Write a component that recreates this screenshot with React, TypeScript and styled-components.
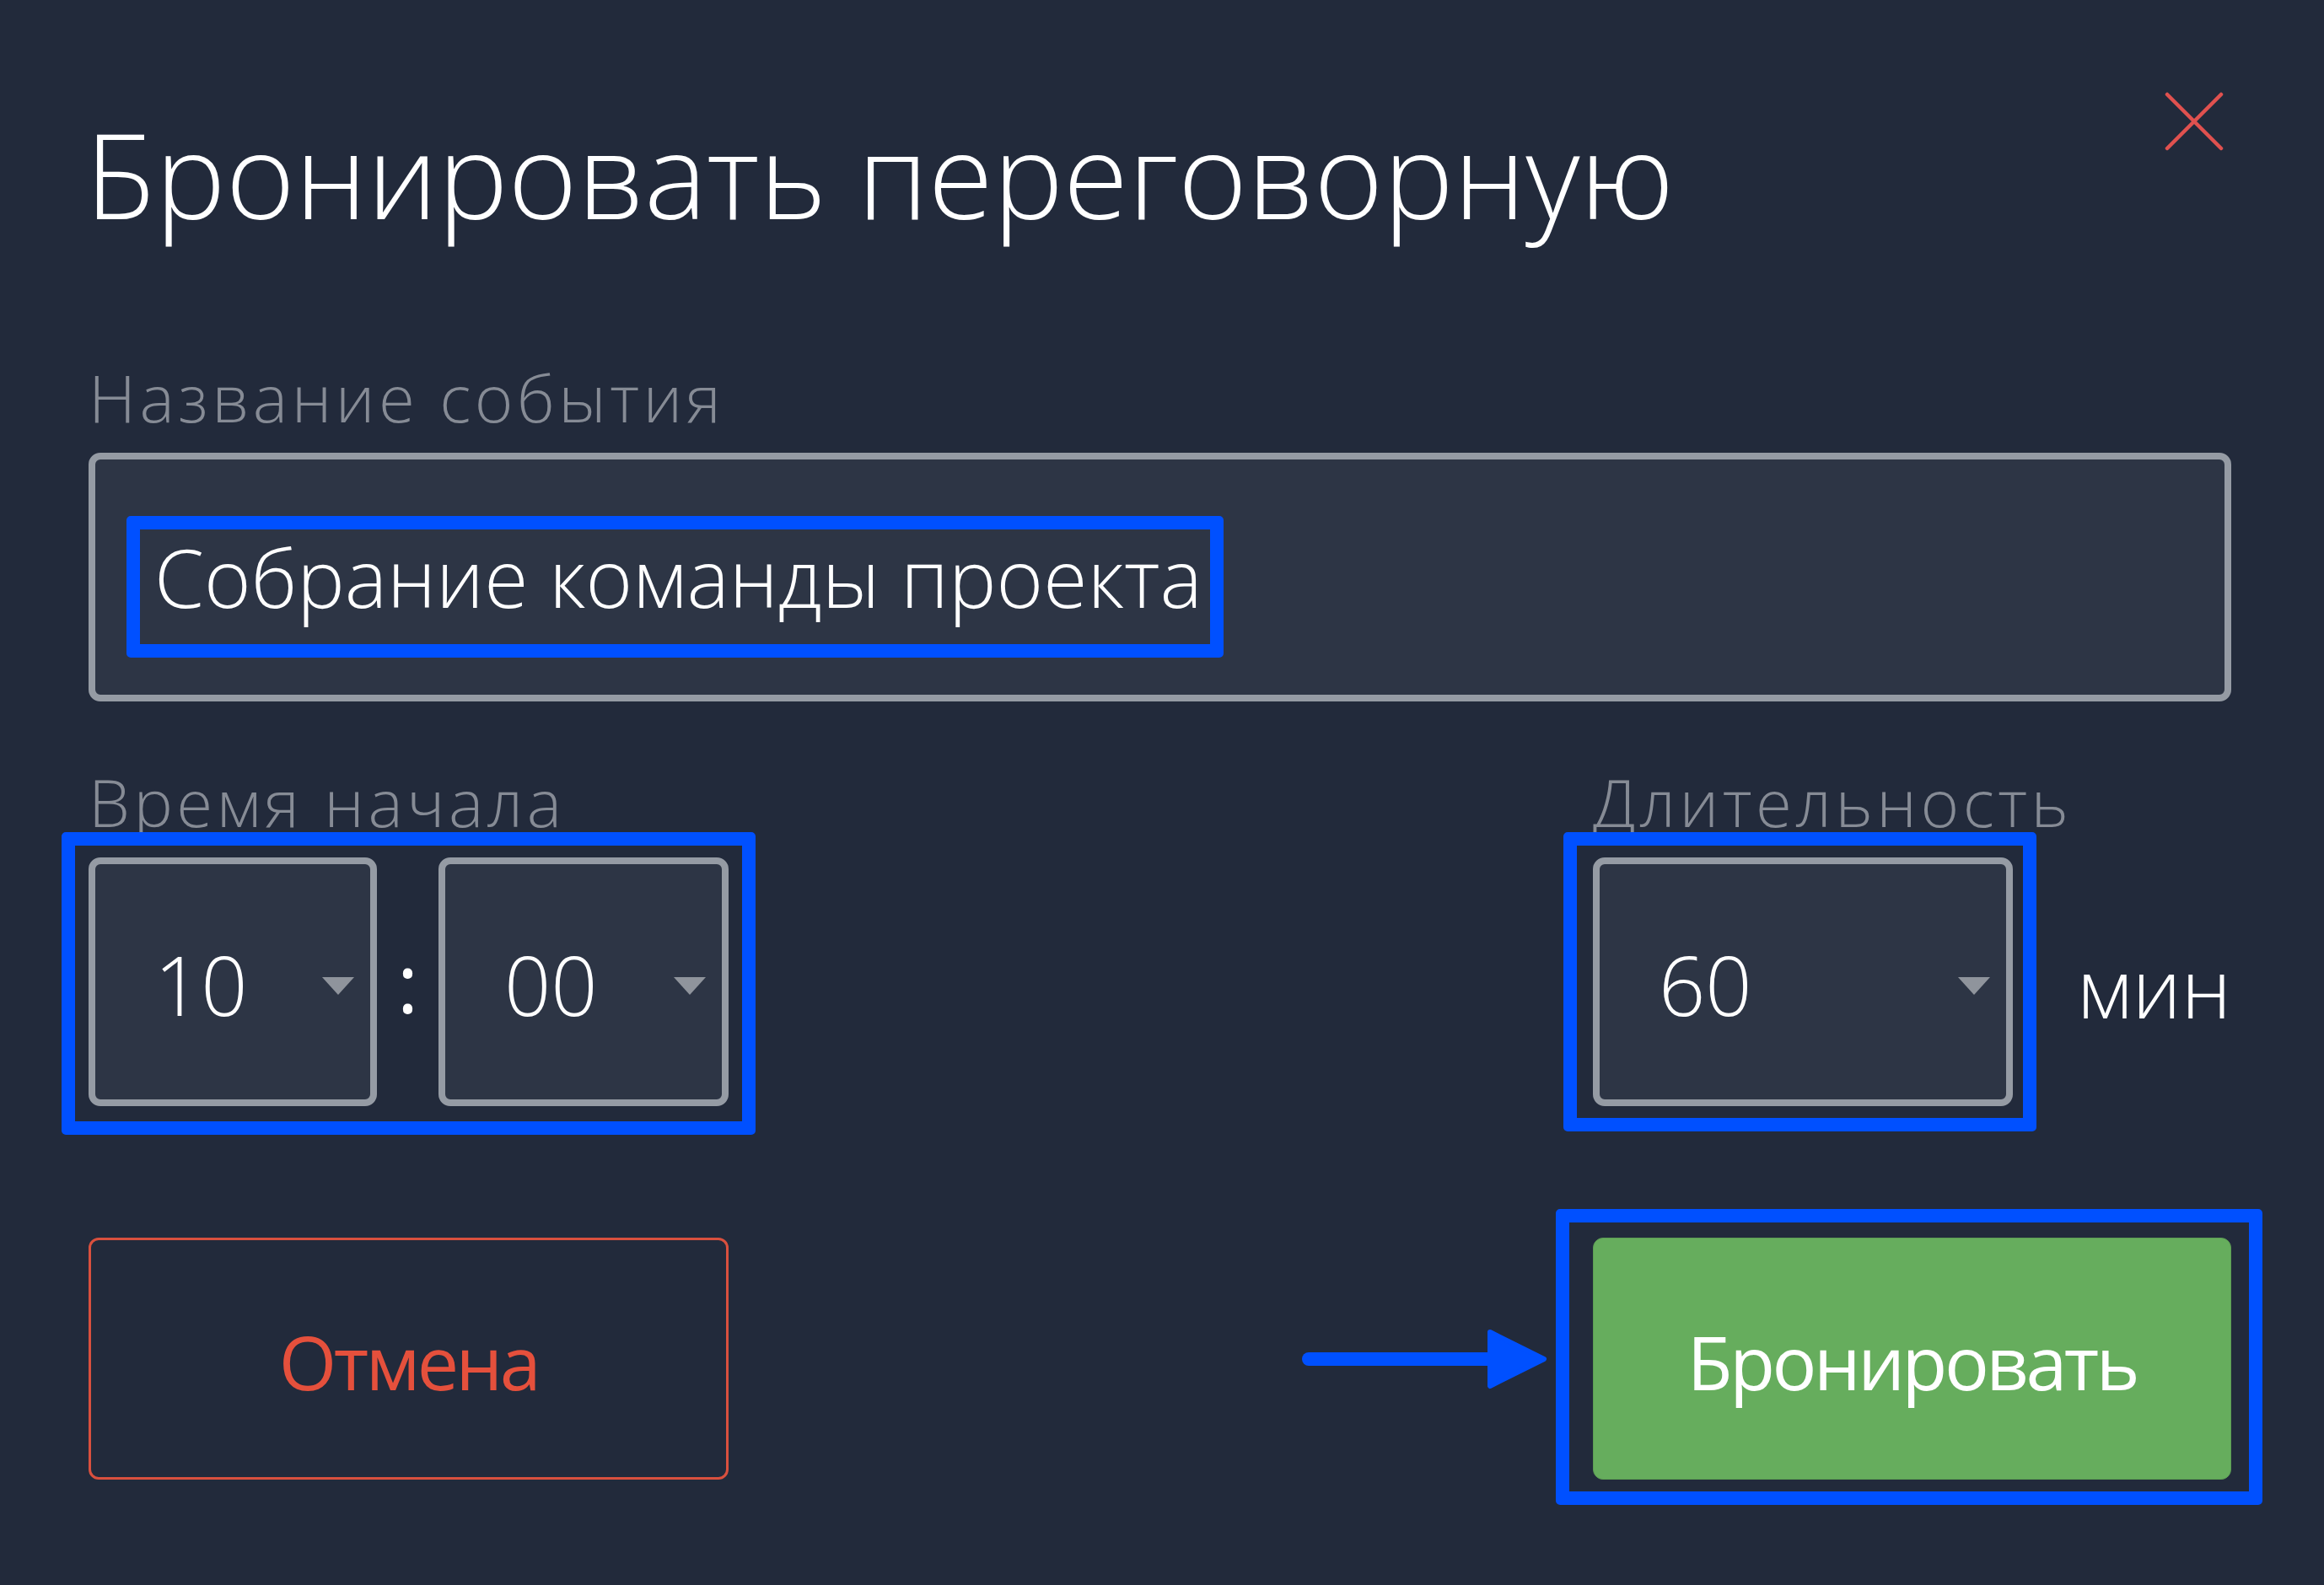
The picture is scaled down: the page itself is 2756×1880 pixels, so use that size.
import React from "react";
import styled, { createGlobalStyle } from "styled-components";

const GlobalStyle = createGlobalStyle`
  html, body {
    margin: 0;
    padding: 0;
    background: #222a3b;
  }
  body {
    font-family: "Open Sans", "Noto Sans", sans-serif;
  }
`;

const Dialog = styled.div`
  box-sizing: border-box;
  width: 2756px;
  min-height: 1880px;
  padding: 109px 110px 0 105px;
  background: #222a3b;
  color: #ffffff;
  font-weight: 300;
`;

const Header = styled.header`
  display: flex;
  justify-content: space-between;
  align-items: flex-start;
`;

const Title = styled.h1`
  margin: 27px 0 0 -4px;
  font-size: 140px;
  line-height: 140px;
  font-weight: 300;
`;

const CloseButton = styled.button`
  width: 70px;
  height: 70px;
  margin-right: 9px;
  padding: 0;
  border: none;
  background: none;
  color: #e0514f;
  cursor: pointer;

  svg {
    display: block;
  }
`;

const Label = styled.div`
  font-size: 78px;
  line-height: 78px;
  color: #868b95;
  letter-spacing: 4.5px;
  margin-bottom: 27px;
`;

const NameSection = styled.section`
  margin-top: 156px;
`;

const TextField = styled.div`
  box-sizing: border-box;
  display: flex;
  align-items: center;
  height: 295px;
  padding-left: 70px;
  border: 8px solid #959ba4;
  border-radius: 14px;
  background: #2d3545;
  font-size: 95px;
  line-height: 95px;
`;

type Inset = { $t: number; $r: number; $b: number; $l: number };

// blue annotation frame laid over the marked element
const Highlight = styled.div<Inset>`
  position: relative;

  &::after {
    content: "";
    position: absolute;
    top: -${(p) => p.$t}px;
    right: -${(p) => p.$r}px;
    bottom: -${(p) => p.$b}px;
    left: -${(p) => p.$l}px;
    border: 16px solid #0050ff;
    border-radius: 5px;
    pointer-events: none;
  }
`;

const InlineHighlight = styled(Highlight)`
  display: inline-block;
`;

const Columns = styled.div<{ $top: number }>`
  display: grid;
  grid-template-columns: 759px 1fr 757px;
  margin-top: ${(p) => p.$top}px;
`;

const TimeGroup = styled.div`
  display: grid;
  grid-template-columns: 342px 1fr 344px;
  align-items: center;
`;

const Colon = styled.span`
  text-align: center;
  font-size: 97px;
  line-height: 97px;
  font-weight: 400;
`;

const Select = styled.div<{ $width?: number }>`
  box-sizing: border-box;
  display: flex;
  align-items: center;
  justify-content: space-between;
  width: ${(p) => (p.$width ? `${p.$width}px` : "auto")};
  height: 295px;
  padding: 6px 19px 0 70px;
  border: 8px solid #959ba4;
  border-radius: 14px;
  background: #2d3545;
  font-size: 97px;
  line-height: 97px;
`;

const Caret = styled.span`
  width: 0;
  height: 0;
  margin-top: 4px;
  border-left: 19px solid transparent;
  border-right: 19px solid transparent;
  border-top: 21px solid #8f949c;
`;

const DurationRow = styled.div`
  display: flex;
  align-items: center;
  justify-content: space-between;
`;

const Unit = styled.span`
  font-size: 97px;
  line-height: 97px;
  padding-top: 12px;
`;

const Button = styled.button<{ $primary?: boolean }>`
  box-sizing: border-box;
  width: 100%;
  height: 287px;
  padding-top: 8px;
  border-radius: 12px;
  border: ${(p) => (p.$primary ? "1px solid #5d9e54" : "3px solid #d9503e")};
  background: ${(p) => (p.$primary ? "#66ad5d" : "transparent")};
  color: ${(p) => (p.$primary ? "#ffffff" : "#e5503c")};
  font-family: "Open Sans", "Noto Sans", sans-serif;
  font-size: 88px;
  font-weight: 400;
  letter-spacing: -3.5px;
  cursor: pointer;
`;

const ArrowCell = styled.div`
  display: flex;
  align-items: center;
  justify-content: flex-end;
  padding-right: 54px;

  svg {
    display: block;
  }
`;

const ChevronDown = () => <Caret />;

export default function App() {
  return (
    <>
      <GlobalStyle />
      <Dialog>
        <Header>
          <Title>Бронировать переговорную</Title>
          <CloseButton aria-label="Закрыть">
            <svg width="70" height="70" viewBox="0 0 70 70">
              <path
                d="M3 3 L67 67 M67 3 L3 67"
                stroke="currentColor"
                strokeWidth="4.5"
                strokeLinecap="round"
              />
            </svg>
          </CloseButton>
        </Header>

        <NameSection>
          <Label>Название события</Label>
          <TextField>
            <InlineHighlight $t={25} $r={25} $b={48} $l={33}>
              Собрание команды проекта
            </InlineHighlight>
          </TextField>
        </NameSection>

        <Columns $top={80}>
          <div>
            <Label>Время начала</Label>
            <Highlight $t={30} $r={32} $b={34} $l={32}>
              <TimeGroup>
                <Select>
                  <span>10</span>
                  <ChevronDown />
                </Select>
                <Colon>:</Colon>
                <Select>
                  <span>00</span>
                  <ChevronDown />
                </Select>
              </TimeGroup>
            </Highlight>
          </div>
          <div />
          <div>
            <Label>Длительность</Label>
            <DurationRow>
              <Highlight $t={30} $r={28} $b={30} $l={35}>
                <Select $width={498}>
                  <span>60</span>
                  <ChevronDown />
                </Select>
              </Highlight>
              <Unit>мин</Unit>
            </DurationRow>
          </div>
        </Columns>

        <Columns $top={156}>
          <Button>Отмена</Button>
          <ArrowCell>
            <svg width="292" height="72" viewBox="0 0 292 72">
              <path
                d="M9 36 H226"
                stroke="#0050ff"
                strokeWidth="16"
                strokeLinecap="round"
              />
              <path
                d="M224 4 L288 36 L224 68 Z"
                fill="#0050ff"
                stroke="#0050ff"
                strokeWidth="6"
                strokeLinejoin="round"
              />
            </svg>
          </ArrowCell>
          <Highlight $t={34} $r={37} $b={30} $l={44}>
            <Button $primary>Бронировать</Button>
          </Highlight>
        </Columns>
      </Dialog>
    </>
  );
}
